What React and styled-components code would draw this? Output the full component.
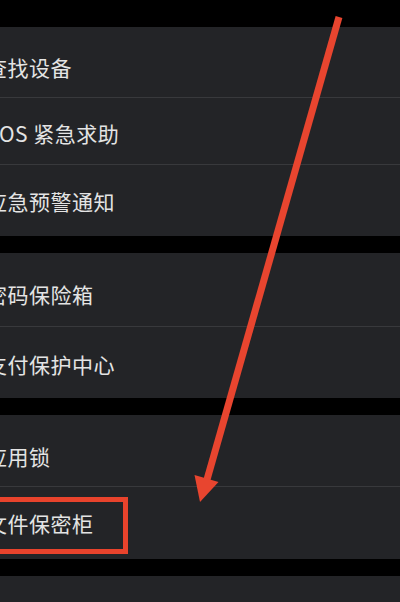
import React from 'react';
import styled, { createGlobalStyle } from 'styled-components';

const GlobalStyle = createGlobalStyle`
  html, body {
    margin: 0;
    padding: 0;
    background: #000;
    overflow: hidden;
  }
`;

const StyledPage = styled.div`
  position: relative;
  width: 400px;
  height: 602px;
  overflow: hidden;
  background: #000;
  padding-top: 27px;
  box-sizing: border-box;
  font-family: 'Noto Sans CJK SC', 'Noto Sans', sans-serif;
  display: flex;
  flex-direction: column;
  gap: 17px;
`;

const StyledGroup = styled.div`
  background: #232427;
  display: flex;
  flex-direction: column;
`;

const StyledRow = styled.div`
  position: relative;
  height: ${(p) => p.$h}px;
  padding-top: ${(p) => p.$nudge || 0}px;
  box-sizing: border-box;
  display: flex;
  align-items: center;
  border-bottom: ${(p) => (p.$last ? 'none' : '1px solid #38393c')};
`;

const StyledLabel = styled.span`
  margin-left: -14px;
  font-size: 21px;
  letter-spacing: 0.5px;
  color: #e4e4e4;
  white-space: nowrap;
`;

const StyledHighlight = styled.div`
  position: absolute;
  left: -10px;
  top: 10px;
  width: 138px;
  height: 57px;
  box-sizing: border-box;
  border: 5px solid #e8432c;
`;

const StyledArrow = styled.svg`
  position: absolute;
  left: 0;
  top: 0;
  pointer-events: none;
`;

const groups = [
  [
    { text: '查找设备', h: 71, nudge: 10 },
    { text: 'SOS 紧急求助', h: 67, nudge: 4 },
    { text: '应急预警通知', h: 71 },
  ],
  [
    { text: '密码保险箱', h: 74, nudge: 8 },
    { text: '支付保护中心', h: 71, nudge: 2 },
  ],
  [
    { text: '应用锁', h: 72, nudge: 10 },
    { text: '文件保密柜', h: 72, boxed: true },
  ],
  [{ text: '', h: 40 }],
];

const App = () => {
  return (
    <StyledPage>
      <GlobalStyle />
      {groups.map((rows, gi) => (
        <StyledGroup key={gi}>
          {rows.map((r, i) => (
            <StyledRow key={i} $h={r.h} $nudge={r.nudge} $last={i === rows.length - 1}>
              <StyledLabel>{r.text}</StyledLabel>
              {r.boxed && <StyledHighlight />}
            </StyledRow>
          ))}
        </StyledGroup>
      ))}
      <StyledArrow width="400" height="602" viewBox="0 0 400 602">
        <line x1="339" y1="17" x2="206.6" y2="481" stroke="#e8452f" strokeWidth="7" />
        <polygon points="200,502 194.5,475 218.5,482" fill="#e8452f" />
      </StyledArrow>
    </StyledPage>
  );
};

export default App;
